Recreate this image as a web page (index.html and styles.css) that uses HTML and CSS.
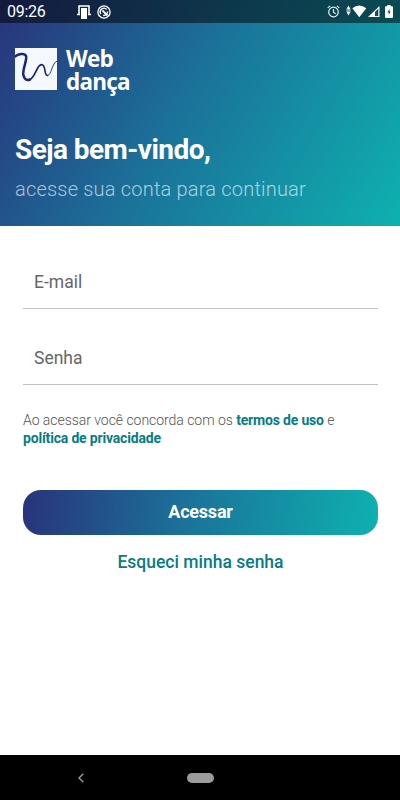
FILE: index.html
```html
<!DOCTYPE html>
<html lang="pt-BR">
<head>
  <meta charset="UTF-8">
  <meta name="viewport" content="width=device-width, initial-scale=1.0">
  <title>Web dança</title>
  <link rel="stylesheet" href="styles.css">
</head>
<body>
  <div class="screen">
    <header class="header">
      <div class="status-bar">
        <span class="clock">09:26</span>
        <svg class="icon-cast" width="14" height="14" viewBox="0 0 14 14">
          <path d="M2 9V1h10v8M0 9.5h3M11 9.5h3" fill="none" stroke="#fff" stroke-width="1.6"/>
          <rect x="4" y="3" width="6" height="11" fill="#fff"/>
        </svg>
        <svg class="icon-sync" width="14" height="14" viewBox="0 0 14 14" fill="none" stroke="#fff">
          <circle cx="7" cy="7" r="6.1" stroke-width="1.3"/>
          <path d="M4 9.2A3.7 3.7 0 0 1 9.7 4.5M10.5 6.4a3.6 3.6 0 0 1-4.400 4" stroke-width="1.4"/>
          <path d="M5.500 5.500l5 5" stroke-width="1.800"/>
        </svg>
        <svg class="icon-alarm" width="13" height="13" viewBox="0 0 13 13" fill="none" stroke="#e8f0f0">
          <circle cx="6.5" cy="7" r="4.8" stroke-width="1.2"/>
          <path d="M6.5 4v3.3l2.2 1.5M.7 2.9L3.2.9M12.3 2.9L9.8.9" stroke-width="1.1"/>
        </svg>
        <svg class="icon-signal" width="36" height="13" viewBox="0 0 36 13">
          <path d="M2.500 .5L4.700 4.500H.3zM2.500 10.500L.3 6.500h4.400z" fill="#f4f8f8"/>
          <path d="M.5 4.500h4v2h-4z" fill="#a3a9ac"/>
          <path d="M6.3 3.3q7-5.6 14 0L13.3 12.2z" fill="#fff"/>
          <path d="M33.5 1v11H22z" fill="#fff"/>
          <path d="M32.3 3.800V11H29V7z" fill="#124b59"/>
        </svg>
        <svg class="icon-battery" width="8" height="13" viewBox="0 0 8 13">
          <path d="M2.3 0h3.4v1.3H7q1 0 1 1V12q0 1-1 1H1q-1 0-1-1V2.3q0-1 1-1h1.3z" fill="#fff"/>
          <path d="M4.500 3.800L2.500 7.500h1.300v2.800L5.500 6.500H4.500z" fill="#104c57"/>
        </svg>
      </div>
      <div class="brand">
        <svg class="logo" width="42" height="42" viewBox="0 0 42 42">
          <rect width="42" height="42" fill="#f5f8fc"/>
          <g fill="none" stroke="#17277a" stroke-linecap="round">
            <path d="M0 8.500C3 6 9.500 4.500 11 8C12.500 12 7.500 20 8.300 26.500C9 31 11.500 33 15 31.500" stroke-width="2.500"/>
            <path d="M15 31.500C21 28.500 21.500 17 26.500 16.700C31.500 16.500 28.500 27.500 32.500 27.500" stroke-width="1.700"/>
            <path d="M32.500 27.500C36.800 27.500 36.500 15 42 13" stroke-width=".9"/>
          </g>
        </svg>
        <div class="brand-name">Web<br>dança</div>
      </div>
      <h1>Seja bem-vindo,</h1>
      <p class="subtitle">acesse sua conta para continuar</p>
    </header>

    <main class="content">
      <div class="field">E-mail</div>
      <div class="field">Senha</div>
      <p class="terms">
        Ao acessar você concorda com os
        <a>termos de uso</a> e<br>
        <a>política de privacidade</a>
      </p>
      <button class="submit" type="button">Acessar</button>
      <a class="forgot">Esqueci minha senha</a>
    </main>

    <nav class="nav-bar">
      <svg class="back" width="6" height="10" viewBox="0 0 6 10">
        <path d="M5.3.7L1 5l4.3 4.3" fill="none" stroke="#9b9b9b" stroke-width="1.4"/>
      </svg>
      <span class="home"></span>
    </nav>
  </div>
</body>
</html>
```

FILE: styles.css
```css
* {
  box-sizing: border-box;
}
body {
  margin: 0;
  font-family: Roboto, sans-serif;
  background: #fff;
}
.screen {
  display: flex;
  flex-direction: column;
  width: 400px;
  height: 800px;
  overflow: hidden;
}
.header {
  height: 226px;
  color: #fff;
  background: linear-gradient(119.5deg, #29337b, #1b7199 45%, #0eb1b0);
}
.status-bar {
  display: flex;
  align-items: center;
  height: 23px;
  padding: 0 7px;
  background: rgba(0, 0, 0, 0.5);
}
.clock {
  width: 70px;
  font-size: 16px;
  line-height: 23px;
  letter-spacing: -0.3px;
}
.icon-cast {
  margin-top: 1px;
}
.icon-sync {
  margin-left: 6px;
}
.icon-alarm {
  margin-left: auto;
}
.icon-signal {
  margin-left: 6px;
}
.icon-battery {
  margin-left: 3px;
}
.brand {
  display: flex;
  gap: 9px;
  height: 74px;
  padding: 25px 15px 0;
}
.logo {
  flex-shrink: 0;
}
.brand-name {
  font-family: "Open Sans", sans-serif;
  font-size: 22.5px;
  font-weight: 700;
  line-height: 23px;
  margin-top: -1px;
  letter-spacing: -0.8px;
}
h1 {
  margin: 37px 15px 0;
  font-size: 28px;
  font-weight: 700;
  line-height: 32px;
  letter-spacing: -0.55px;
  white-space: nowrap;
}
.subtitle {
  margin: 11px 15px 0;
  font-size: 20px;
  font-weight: 300;
  line-height: 24px;
  letter-spacing: 0.2px;
  color: rgba(255, 255, 255, 0.65);
  white-space: nowrap;
}
.content {
  display: flex;
  flex-direction: column;
  flex: 1;
  padding: 31px 22px 0 23px;
}
.field {
  height: 52px;
  margin-bottom: 24px;
  padding: 13px 11px 0;
  font-size: 17.5px;
  line-height: 24px;
  color: #666;
  border-bottom: 1px solid #c2c2c2;
}
.terms {
  margin: 2px 0 0;
  font-size: 14px;
  line-height: 18px;
  font-weight: 300;
  letter-spacing: -0.04px;
  color: #555;
  white-space: nowrap;
}
.terms a {
  font-weight: 700;
  letter-spacing: -0.18px;
  color: #077c84;
}
.submit {
  height: 45px;
  margin-top: 43px;
  padding: 0 0 3px;
  border: 0;
  border-radius: 18px;
  font-family: Roboto, sans-serif;
  font-size: 18px;
  font-weight: 700;
  letter-spacing: -0.2px;
  color: #fff;
  background: linear-gradient(97.2deg, #29337b, #1b7199 45%, #0eb1b0);
}
.forgot {
  align-self: center;
  margin-top: 15px;
  font-size: 17.5px;
  font-weight: 500;
  line-height: 24px;
  color: #077c84;
}
.nav-bar {
  display: flex;
  align-items: center;
  height: 45px;
  padding-left: 78px;
  background: #000;
}
.home {
  width: 27px;
  height: 10px;
  margin-left: 103px;
  border-radius: 5px;
  background: #9b9b9b;
}
```
